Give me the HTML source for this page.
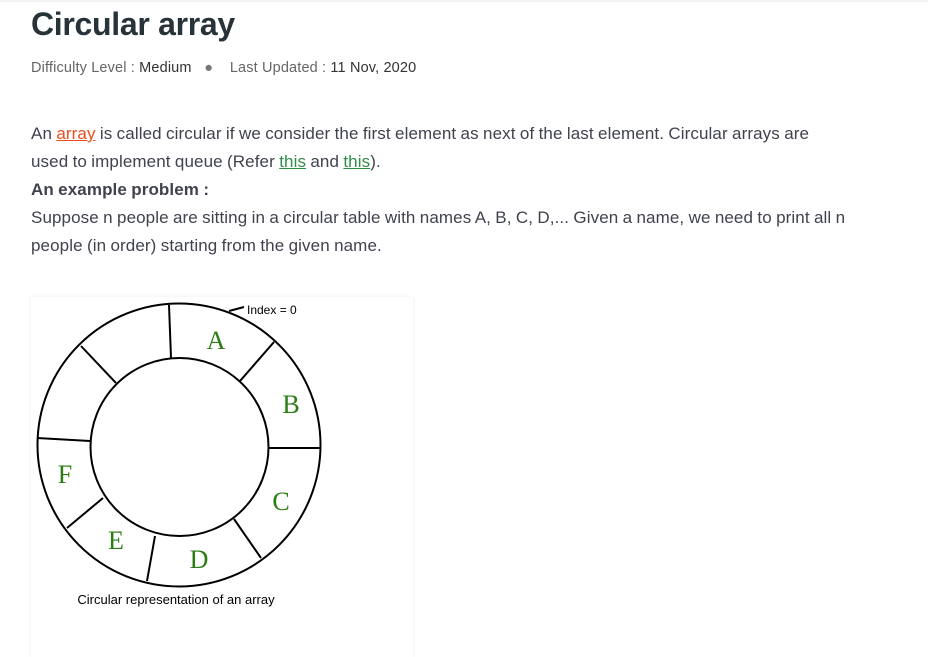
<!DOCTYPE html>
<html><head><meta charset="utf-8"><style>
body{margin:0;background:#fff;width:928px;height:650px;overflow:hidden;font-family:"Liberation Sans",sans-serif;color:#40424e;position:relative}
.top{position:absolute;left:0;top:0;width:928px;height:2px;background:#f4f4f4}
h1{position:absolute;left:31px;top:6px;margin:0;font-size:32px;font-weight:bold;color:#273239;letter-spacing:-0.3px}
.meta{position:absolute;left:31px;top:60px;font-size:14.5px;color:#666;white-space:nowrap;letter-spacing:0.15px}
.meta b{font-weight:normal;color:#333}
.body{position:absolute;left:31px;top:120px;font-size:17px;line-height:28px;white-space:nowrap;letter-spacing:0.1px;word-spacing:-0.5px;color:#40424e}
.body a{text-decoration:underline}
.card{position:absolute;left:31px;top:297px;width:382px;height:360px;background:#fff;box-shadow:0 0 3px rgba(0,0,0,0.08)}
</style></head><body>
<div class="top"></div>
<h1>Circular array</h1>
<div class="meta">Difficulty Level : <b>Medium</b> &nbsp;&nbsp;<span style="color:#777">●</span>&nbsp;&nbsp;&nbsp; Last Updated : <b>11 Nov, 2020</b></div>
<div class="body">An <a style="color:#ec4e20">array</a> is called circular if we consider the first element as next of the last element. Circular arrays are<br>used to implement queue (Refer <a style="color:#2f8d46">this</a> and <a style="color:#2f8d46">this</a>).<br><b>An example problem :</b><br>Suppose n people are sitting in a circular table with names A, B, C, D,... Given a name, we need to print all n<br>people (in order) starting from the given name.</div>
<div class="card"></div>
<svg style="position:absolute;left:0;top:0" width="928" height="650">
<g stroke="#000" stroke-width="2" fill="none">
<circle cx="179" cy="445" r="141.5"/>
<circle cx="179.5" cy="447" r="89"/>
<line x1="169" y1="305" x2="171" y2="358"/>
<line x1="274" y1="342" x2="240" y2="381"/>
<line x1="320" y1="448" x2="269" y2="448"/>
<line x1="261" y1="558" x2="234" y2="519"/>
<line x1="147" y1="581" x2="155" y2="536"/>
<line x1="67" y1="528" x2="103" y2="498"/>
<line x1="37" y1="438" x2="90" y2="441"/>
<line x1="81" y1="346" x2="116" y2="383"/>
<line x1="229" y1="311" x2="244" y2="307"/>
</g>
<g fill="#2a7d12" font-family="Liberation Serif,serif" font-size="26" text-anchor="middle">
<text x="216" y="349">A</text><text x="291" y="413">B</text><text x="281" y="510">C</text>
<text x="199" y="568">D</text><text x="116" y="549">E</text><text x="65" y="483">F</text>
</g>
<text x="247" y="314" font-size="12" font-family="Liberation Sans,sans-serif" fill="#000">Index = 0</text>
<text x="176" y="604" font-size="13" font-family="Liberation Sans,sans-serif" fill="#000" text-anchor="middle">Circular representation of an array</text>
</svg>
</body></html>
